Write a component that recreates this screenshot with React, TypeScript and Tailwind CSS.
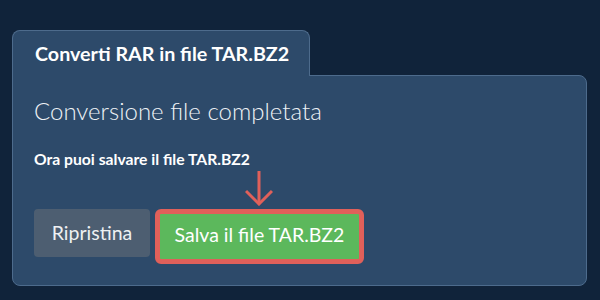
export default function App() {
  return (
    <div
      className="h-[300px] w-[600px] bg-[#10233a] pt-[30px] pl-[12px]"
      style={{ fontFamily: "Lato, 'Open Sans', sans-serif" }}
    >
      <div className="flex w-[575px] flex-col">
        <div className="relative z-10 -mb-px w-[298px] rounded-t-lg border border-b-0 border-[#4d6b8c] bg-[#2d4a6a] pl-[22px] pt-[13px] pb-[12px]">
          <h1 className="whitespace-nowrap text-[19.7px] font-bold leading-[20px] text-white">Converti RAR in file TAR.BZ2</h1>
        </div>
        <div className="h-[211px] rounded-b-lg rounded-tr-lg border border-[#4d6b8c] bg-[#2d4a6a] px-[21px] pt-[20px]">
          <h2 className="text-[24px] font-light leading-[30px] text-[#eef2f6]">Conversione file completata</h2>
          <p className="mt-[23px] text-[15.7px] font-bold leading-[20px] text-white">Ora puoi salvare il file TAR.BZ2</p>
          <div className="relative mt-[40px] flex items-start gap-[5px]">
            <svg
              className="absolute left-[211px] -top-[38px]"
              width="28"
              height="35"
              viewBox="0 0 28 35"
              fill="none"
              stroke="#e0605a"
              strokeWidth="3"
            >
              <path d="M14 0 L14 33" />
              <path d="M1 20 L14 33 L27 20" />
            </svg>
            <button className="h-[48px] w-[116px] rounded bg-[#4d5e71] text-[19.5px] text-[#eef0f2]">Ripristina</button>
            <button className="h-[55px] w-[209px] rounded-md border-[5px] border-[#e0605a] bg-[#5cb85c] pb-[4px] text-[19.5px] text-white">
              Salva il file TAR.BZ2
            </button>
          </div>
        </div>
      </div>
    </div>
  );
}
